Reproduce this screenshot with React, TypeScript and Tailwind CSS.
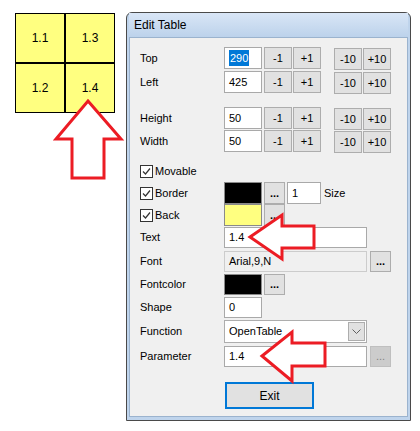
import React from 'react';

const btn = 'flex items-center justify-center border border-[#adadad] bg-[#e1e1e1] text-black';
const field = 'flex items-center border border-[#a9a9a9] bg-white pl-[4px] text-black';

function Label({ children }: { children: React.ReactNode }) {
  return <div className="w-[84px] shrink-0">{children}</div>;
}

function Stepper({ value, selected }: { value: string; selected?: boolean }) {
  return (
    <>
      <div className={`${field} h-[22px] w-[38px]`}>
        {selected ? <span className="bg-[#0078d7] px-px text-white">{value}</span> : value}
      </div>
      <div className={`${btn} ml-[2px] h-[22px] w-[28px]`}>-1</div>
      <div className={`${btn} ml-px h-[22px] w-[28px]`}>+1</div>
      <div className={`${btn} ml-[13px] mt-[2px] h-[22px] w-[28px]`}>-10</div>
      <div className={`${btn} ml-px mt-[2px] h-[22px] w-[28px]`}>+10</div>
    </>
  );
}

function Check({ label }: { label: string }) {
  return (
    <div className="flex items-center">
      <div className="flex h-[13px] w-[13px] items-center justify-center border border-[#333333] bg-white">
        <svg width="9" height="9" viewBox="0 0 9 9">
          <polyline points="1,4.5 3.5,7 8,1.5" fill="none" stroke="#333333" strokeWidth="1.2" />
        </svg>
      </div>
      <span className="ml-[2px]">{label}</span>
    </div>
  );
}

function Dots({ disabled }: { disabled?: boolean }) {
  return disabled ? (
    <div className="flex h-[21px] w-[21px] items-center justify-center border border-[#bfbfbf] bg-[#cccccc] text-[#838383]">...</div>
  ) : (
    <div className={`${btn} h-[21px] w-[21px] font-bold`}>...</div>
  );
}

const cells = ['1.1', '1.3', '1.2', '1.4'];

export default function App() {
  return (
    <div className="relative h-[431px] w-[420px] overflow-hidden bg-white font-['Liberation_Sans',Arial,sans-serif] text-[11px] text-black">
      <div className="flex">
        <div className="w-[126px] shrink-0 pl-[15px] pt-[13px]">
          <div className="grid w-[100px] grid-cols-2">
            {cells.map((c) => (
              <div key={c} className="flex h-[50px] w-[50px] items-center justify-center border border-black bg-[#ffff80] text-[12px]">
                {c}
              </div>
            ))}
          </div>
        </div>

        <div className="mt-[12px] flex h-[409px] w-[285px] flex-col rounded-t-[6px] border border-[#4a4a4a] bg-[#bfd4ec] px-[2px] pb-[3px]">
          <div className="flex h-[24px] items-center bg-gradient-to-b from-[#d9e6f6] to-[#bcd2eb] pl-[5px] text-[12px]">
            Edit Table
          </div>
          <div className="flex flex-1 flex-col border border-[#9bb3ce] bg-[#f0f0f0] pl-[10px] pt-[9px]">
            <div className="flex h-[22px] items-center">
              <Label>Top</Label>
              <Stepper value="290" selected />
            </div>
            <div className="mt-[2px] flex h-[22px] items-center">
              <Label>Left</Label>
              <Stepper value="425" />
            </div>
            <div className="mt-[14px] flex h-[22px] items-center">
              <Label>Height</Label>
              <Stepper value="50" />
            </div>
            <div className="mt-px flex h-[22px] items-center">
              <Label>Width</Label>
              <Stepper value="50" />
            </div>

            <div className="mt-[9px] flex h-[20px] items-center">
              <Check label="Movable" />
            </div>
            <div className="mt-px flex h-[22px] items-center">
              <Label>
                <Check label="Border" />
              </Label>
              <div className="h-[22px] w-[38px] border border-[#8a8a8a] bg-black" />
              <div className="ml-[2px]">
                <div className={`${btn} h-[22px] w-[21px] font-bold`}>...</div>
              </div>
              <div className={`${field} ml-[2px] h-[22px] w-[34px]`}>1</div>
              <span className="ml-[3px]">Size</span>
            </div>
            <div className="flex h-[22px] items-center">
              <Label>
                <Check label="Back" />
              </Label>
              <div className="h-[22px] w-[38px] border border-[#8a8a8a] bg-[#ffff80]" />
              <div className="ml-[2px]">
                <div className={`${btn} h-[22px] w-[21px] font-bold`}>...</div>
              </div>
            </div>

            <div className="mt-px flex h-[21px] items-center">
              <Label>Text</Label>
              <div className={`${field} h-[21px] w-[143px]`}>1.4</div>
            </div>
            <div className="mt-[3px] flex h-[21px] items-center">
              <Label>Font</Label>
              <div className="flex h-[21px] w-[143px] items-center border border-[#cccccc] bg-[#f0f0f0] pl-[4px]">Arial,9,N</div>
              <div className="ml-[3px]">
                <Dots />
              </div>
            </div>
            <div className="mt-[2px] flex h-[21px] items-center">
              <Label>Fontcolor</Label>
              <div className="h-[21px] w-[38px] border border-[#8a8a8a] bg-black" />
              <div className="ml-[2px]">
                <Dots />
              </div>
            </div>
            <div className="mt-[2px] flex h-[21px] items-center">
              <Label>Shape</Label>
              <div className={`${field} h-[21px] w-[38px]`}>0</div>
            </div>
            <div className="mt-[2px] flex h-[23px] items-center">
              <Label>Function</Label>
              <div className="flex h-[23px] w-[143px] items-center border border-[#adadad] bg-white pl-[4px] pr-px">
                <span>OpenTable</span>
                <div className="ml-auto flex h-[19px] w-[17px] items-center justify-center border border-[#adadad] bg-[#e1e1e1]">
                  <svg width="9" height="6" viewBox="0 0 9 6">
                    <polyline points="0.5,0.5 4.5,4.5 8.5,0.5" fill="none" stroke="#606060" strokeWidth="1" />
                  </svg>
                </div>
              </div>
            </div>
            <div className="mt-[3px] flex h-[21px] items-center">
              <Label>Parameter</Label>
              <div className={`${field} h-[21px] w-[143px]`}>1.4</div>
              <div className="ml-[3px]">
                <Dots disabled />
              </div>
            </div>

            <div className="ml-[85px] mt-[15px] flex h-[27px] w-[89px] items-center justify-center border-2 border-[#0078d7] bg-[#e1e1e1] text-[12px]">
              Exit
            </div>
          </div>
        </div>
      </div>

      <svg className="pointer-events-none absolute left-0 top-0" width="420" height="431" viewBox="0 0 420 431">
        <g fill="#ffffff" stroke="#ec1c24" strokeWidth="3" strokeLinejoin="miter">
          <polygon points="88,101 121,139 104,139 104,178 72,178 72,139 56,139" />
          <polygon points="250,237 282,215 282,226 314,226 314,248 282,248 282,259" />
          <polygon points="262,356 292,332 292,343 325,343 325,366 292,366 292,381" />
        </g>
      </svg>
    </div>
  );
}
